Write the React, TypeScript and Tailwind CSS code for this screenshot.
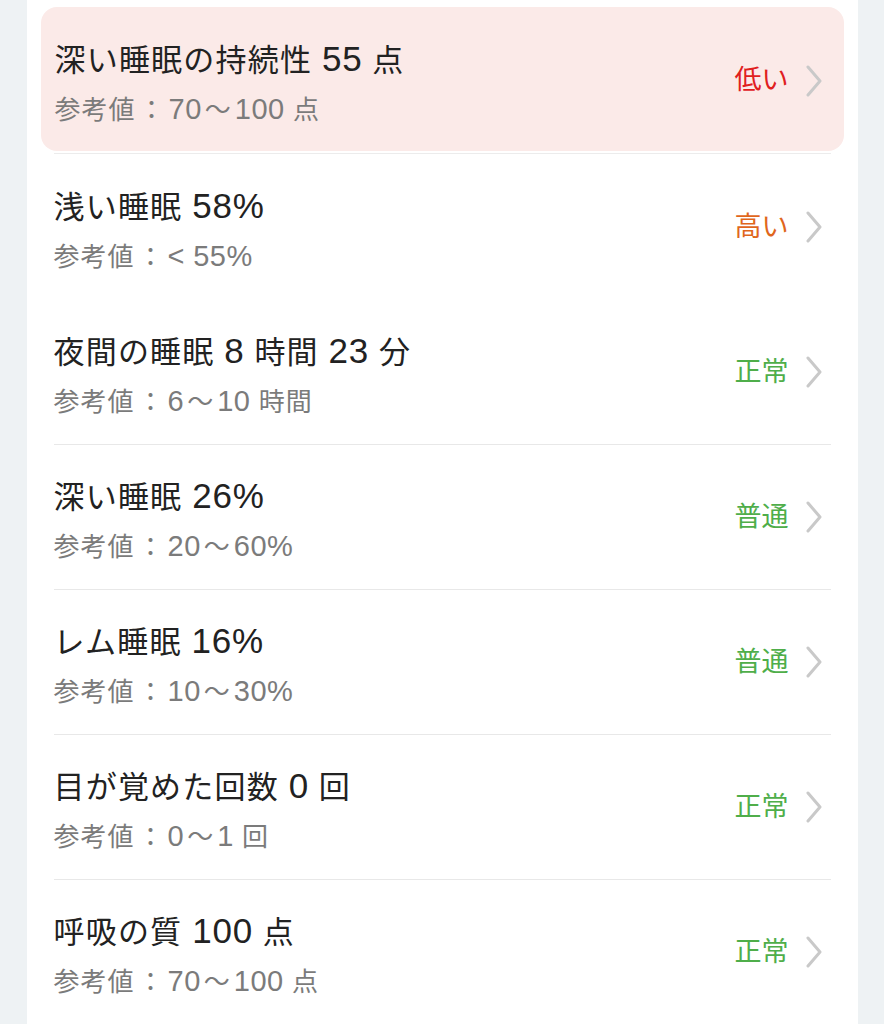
import React from "react";

type Row = { title: string; ref: string; status: string; color: string };

const rows: Row[] = [
  { title: "浅い睡眠 58%", ref: "参考値：< 55%", status: "高い", color: "text-[#e0661c]" },
  { title: "夜間の睡眠 8 時間 23 分", ref: "参考値：6～10 時間", status: "正常", color: "text-[#4fae4a]" },
  { title: "深い睡眠 26%", ref: "参考値：20～60%", status: "普通", color: "text-[#4fae4a]" },
  { title: "レム睡眠 16%", ref: "参考値：10～30%", status: "普通", color: "text-[#4fae4a]" },
  { title: "目が覚めた回数 0 回", ref: "参考値：0～1 回", status: "正常", color: "text-[#4fae4a]" },
  { title: "呼吸の質 100 点", ref: "参考値：70～100 点", status: "正常", color: "text-[#4fae4a]" },
];

const Chevron = () => (
  <svg width="18" height="32" viewBox="0 0 18 32" fill="none" className="shrink-0">
    <path d="M3 2 L15 16 L3 30" stroke="#c9c9c9" strokeWidth="3" strokeLinecap="round" strokeLinejoin="round" />
  </svg>
);

function Mixed({ text, latinClass }: { text: string; latinClass: string }) {
  const parts = text.split(/([0-9%<]+|：|～)/);
  return (
    <>
      {parts.map((p, i) => {
        if (/^[0-9%<]+$/.test(p))
          return (
            <span key={i} className={latinClass}>
              {p}
            </span>
          );
        if (p === "：" || p === "～")
          return (
            <span key={i} className="mx-[3px]">
              {p}
            </span>
          );
        return <React.Fragment key={i}>{p}</React.Fragment>;
      })}
    </>
  );
}

function RowContent({ title, refText, status, color }: { title: string; refText: string; status: string; color: string }) {
  return (
    <div className="flex items-center h-full">
      <div className="flex-1 flex flex-col pt-[6px]">
        <div className="text-[31px] leading-[40px] text-[#222222] tracking-[1.2px] whitespace-nowrap">
          <Mixed text={title} latinClass="text-[35px] tracking-[0.8px]" />
        </div>
        <div className="text-[26px] leading-[36px] text-[#7b7b7b] mt-[10px] tracking-[1px] whitespace-nowrap">
          <Mixed text={refText} latinClass="text-[29px] tracking-[0.5px]" />
        </div>
      </div>
      <div className="flex items-center gap-[16px]">
        <span className={`text-[27px] ${color}`}>{status}</span>
        <Chevron />
      </div>
    </div>
  );
}

export default function App() {
  return (
    <div
      lang="ja"
      className="w-[884px] h-[1024px] bg-[#eef2f4] flex justify-center overflow-hidden"
      style={{ fontFamily: '"Liberation Sans", "Noto Sans CJK JP", sans-serif' }}
    >
      <div className="w-[831px] bg-white">
        <div className="pt-[7px] px-[14px]">
          <div className="h-[144px] rounded-[16px] bg-[#fbeae8] pl-[14px] pr-[21px] pt-[3px]">
            <RowContent title="深い睡眠の持続性 55 点" refText="参考値：70～100 点" status="低い" color="text-[#e0201e]" />
          </div>
        </div>
        <div className="mx-[27px] mt-[2px] h-px bg-[#ececec]" />
        {rows.map((r, i) => (
          <div key={i} className={`mx-[27px] h-[145px] ${i <= 1 ? "border-t border-transparent" : "border-t border-[#e8e8e8]"} pr-[8px]`}>
            <RowContent title={r.title} refText={r.ref} status={r.status} color={r.color} />
          </div>
        ))}
      </div>
    </div>
  );
}
